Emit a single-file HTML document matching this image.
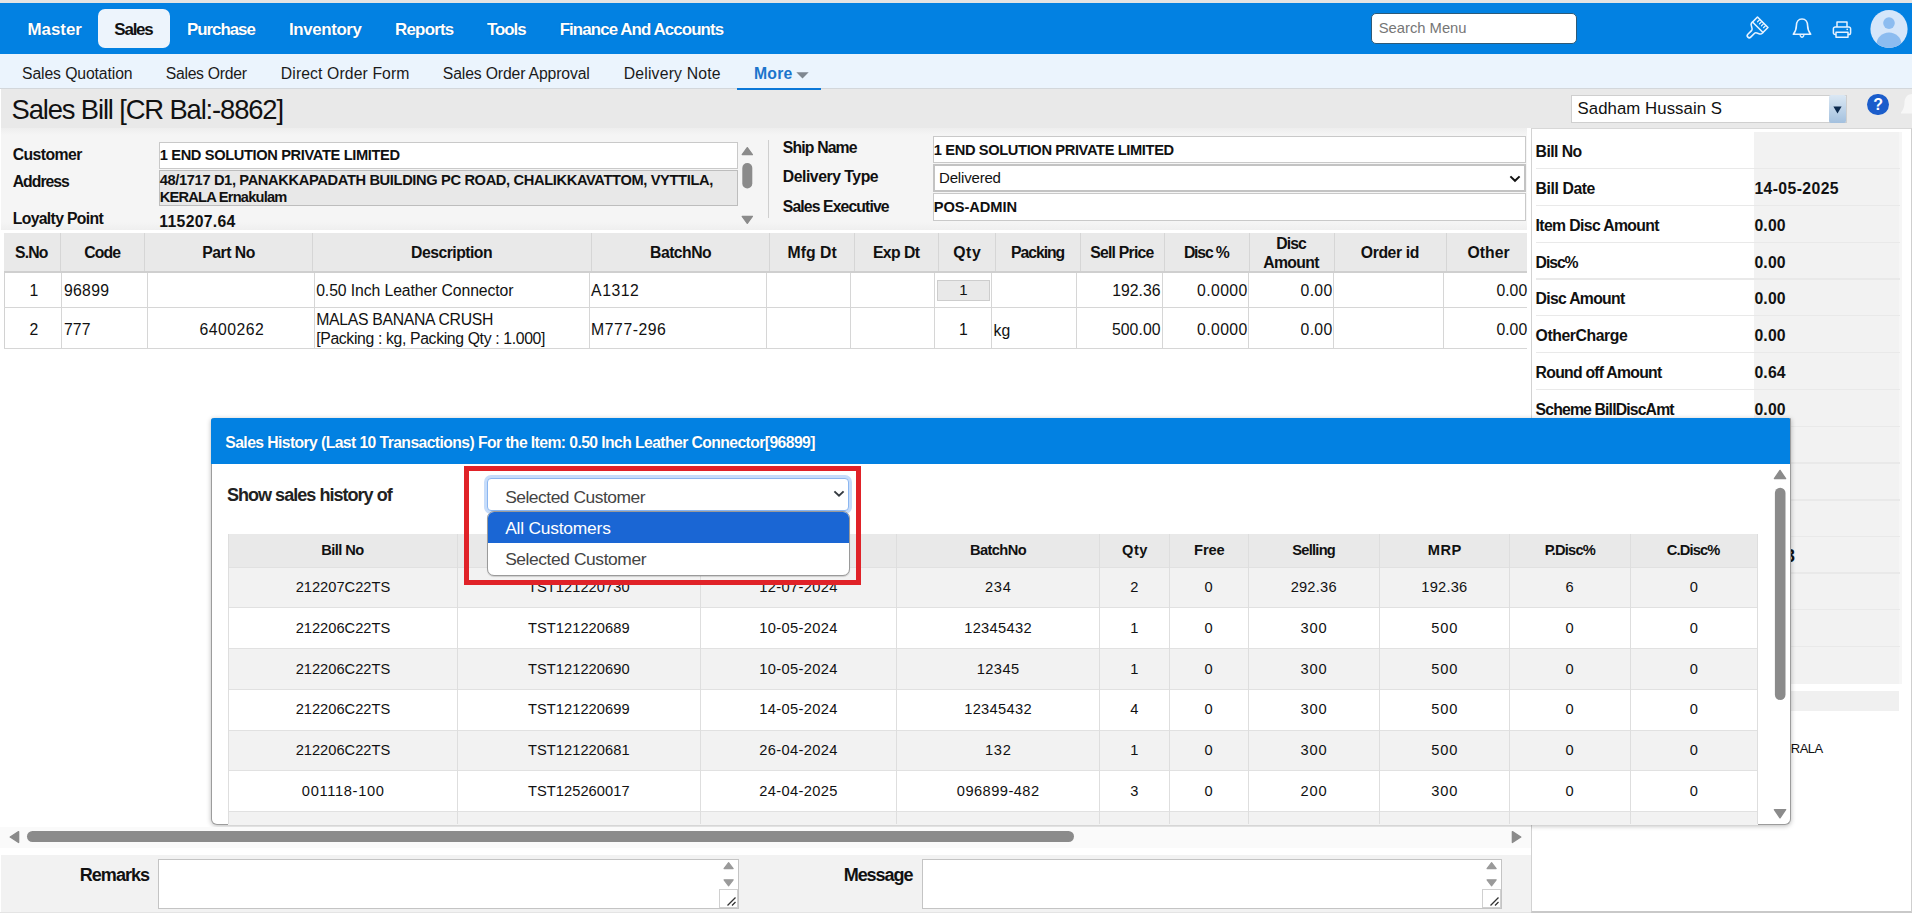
<!DOCTYPE html>
<html lang="en">
<head>
<meta charset="utf-8">
<title>Sales Bill</title>
<style>
*{box-sizing:border-box;margin:0;padding:0}
html,body{width:1912px;height:913px;overflow:hidden;background:#fff;font-family:"Liberation Sans",sans-serif}
#page{position:relative;width:1912px;height:913px;overflow:hidden;background:#fff}
#page div,#page svg{position:absolute}
.t{position:absolute;white-space:nowrap;font-family:"Liberation Sans",sans-serif}
</style>
</head>
<body>
<div id="page">
<div style="left:0px;top:0px;width:1912px;height:3px;background:#e4e4e4"></div>
<div style="left:0px;top:3px;width:1912px;height:51px;background:#0281e2"></div>
<div style="left:98px;top:8.5px;width:72px;height:39.5px;background:#edf4fc;border-radius:7px"></div>
<span class="t" style="left:27.57px;top:20.01px;font-size:16.91px;line-height:19px;color:#fff;font-weight:700;letter-spacing:-0.046px;text-shadow:0 0 1px rgba(0,40,90,.45);">Master</span>
<span class="t" style="left:114.37px;top:20.01px;font-size:16.91px;line-height:19px;color:#111;font-weight:700;letter-spacing:-1.205px;">Sales</span>
<span class="t" style="left:187.07px;top:20.01px;font-size:16.91px;line-height:19px;color:#fff;font-weight:700;letter-spacing:-1.051px;text-shadow:0 0 1px rgba(0,40,90,.45);">Purchase</span>
<span class="t" style="left:289.07px;top:20.01px;font-size:16.91px;line-height:19px;color:#fff;font-weight:700;letter-spacing:-0.405px;text-shadow:0 0 1px rgba(0,40,90,.45);">Inventory</span>
<span class="t" style="left:395.07px;top:20.01px;font-size:16.91px;line-height:19px;color:#fff;font-weight:700;letter-spacing:-0.787px;text-shadow:0 0 1px rgba(0,40,90,.45);">Reports</span>
<span class="t" style="left:487.07px;top:20.01px;font-size:16.91px;line-height:19px;color:#fff;font-weight:700;letter-spacing:-1.065px;text-shadow:0 0 1px rgba(0,40,90,.45);">Tools</span>
<span class="t" style="left:559.67px;top:20.01px;font-size:16.91px;line-height:19px;color:#fff;font-weight:700;letter-spacing:-0.919px;text-shadow:0 0 1px rgba(0,40,90,.45);">Finance And Accounts</span>
<div style="left:1371px;top:13px;width:206px;height:30.6px;background:#fff;border:1px solid #2d5a78;border-radius:5px"></div>
<span class="t" style="left:1378.74px;top:20.19px;font-size:14.8px;line-height:16px;color:#767676;letter-spacing:-0.021px;">Search Menu</span>
<svg style="left:1740.5px;top:14px" width="30" height="30" viewBox="-15 -15 30 30"><g transform="rotate(45)" fill="none" stroke="#e6f2ff" stroke-width="1.6" stroke-linejoin="round" stroke-linecap="round"><path d="M-7.4 -9.5 H7.4 V-1 C7.4 1.5 2 1.5 2 4 V9.5 A2 2 0 0 1 -2 9.5 V4 C-2 1.5 -7.4 1.5 -7.4 -1 Z"/><path d="M-7.4 -2.5 H7.4"/><path d="M-4 -9.5 V-6.2 M-1.2 -9.5 V-6.2 M1.6 -9.5 V-6.2 M4.4 -9.5 V-6.2" stroke-width="1.2"/></g></svg>
<svg style="left:1790px;top:16px" width="24" height="24" viewBox="0 0 24 24"><g fill="none" stroke="#e6f2ff" stroke-width="1.6" stroke-linejoin="round" stroke-linecap="round"><path d="M12 3 C8.3 3 6.4 6 6.4 9.6 C6.4 14 5 16.2 3.3 18.2 H20.7 C19 16.2 17.6 14 17.6 9.6 C17.6 6 15.7 3 12 3 Z"/><path d="M10.2 19.6 Q12 22.8 13.8 19.6" stroke-width="1.4"/></g></svg>
<svg style="left:1829.8px;top:18px" width="24" height="22" viewBox="0 0 24 22"><g fill="none" stroke="#e6f2ff" stroke-width="1.5" stroke-linejoin="round"><path d="M7 9 V4 H17 V9"/><path d="M6 16.5 H5.2 A1.8 1.8 0 0 1 3.4 14.7 V10.8 A1.8 1.8 0 0 1 5.2 9 H18.8 A1.8 1.8 0 0 1 20.6 10.8 V14.7 A1.8 1.8 0 0 1 18.8 16.5 H18"/><path d="M6 14.2 H18 V19.3 H6 Z"/></g><circle cx="17.2" cy="11.4" r=".8" fill="#e6f2ff"/></svg>
<svg style="left:1869.1px;top:9.3px" width="40" height="40" viewBox="0 0 40 40"><defs><clipPath id="av"><ellipse cx="20" cy="20" rx="18.6" ry="19"/></clipPath></defs><ellipse cx="20" cy="20" rx="18.6" ry="19" fill="#d5e6fa"/><g clip-path="url(#av)" fill="#8cbcf0"><circle cx="20" cy="14.1" r="5.8"/><ellipse cx="20" cy="35.5" rx="12.5" ry="12"/></g></svg>
<div style="left:0px;top:54px;width:1912px;height:35px;background:#ebf4fd;border-bottom:1px solid #d3d7db"></div>
<span class="t" style="left:22.01px;top:64.82px;font-size:15.78px;line-height:17px;color:#1a1a1a;letter-spacing:-0.115px;">Sales Quotation</span>
<span class="t" style="left:165.71px;top:64.82px;font-size:15.78px;line-height:17px;color:#1a1a1a;letter-spacing:-0.284px;">Sales Order</span>
<span class="t" style="left:280.81px;top:64.82px;font-size:15.78px;line-height:17px;color:#1a1a1a;letter-spacing:0.104px;">Direct Order Form</span>
<span class="t" style="left:442.81px;top:64.82px;font-size:15.78px;line-height:17px;color:#1a1a1a;letter-spacing:-0.151px;">Sales Order Approval</span>
<span class="t" style="left:623.71px;top:64.82px;font-size:15.78px;line-height:17px;color:#1a1a1a;letter-spacing:0.188px;">Delivery Note</span>
<span class="t" style="left:753.91px;top:64.82px;font-size:15.78px;line-height:17px;color:#1b74cc;font-weight:700;letter-spacing:0.237px;">More</span>
<svg style="left:796px;top:72px" width="13" height="7" viewBox="0 0 13 7"><path d="M0.3 0.3 H12.7 L6.5 6.6 Z" fill="#7f8790"/></svg>
<div style="left:737px;top:88px;width:84px;height:2px;background:#0b78d8"></div>
<div style="left:1px;top:89px;width:1911px;height:39px;background:#e9e9e9"></div>
<div style="left:737px;top:88px;width:84px;height:2px;background:#0b78d8"></div>
<span class="t" style="left:11.57px;top:93.92px;font-size:27.4px;line-height:31px;color:#111;letter-spacing:-1.144px;">Sales Bill [CR Bal:-8862]</span>
<div style="left:1571px;top:95.4px;width:275.5px;height:27.2px;background:#fff;border:1px solid #cfcfcf"></div>
<div style="left:1828.6px;top:95.4px;width:17.4px;height:27.4px;background:linear-gradient(#dbe8f4,#a3c0de);border-radius:2px"></div>
<svg style="left:1833px;top:105.5px" width="9" height="8" viewBox="0 0 9 8"><path d="M0.4 0.4 H8.6 L4.5 7.6 Z" fill="#0c2a4e"/></svg>
<span class="t" style="left:1577.57px;top:99.08px;font-size:16.8px;line-height:19px;color:#111;letter-spacing:0.054px;">Sadham Hussain S</span>
<div style="left:1867.2px;top:93.5px;width:21.9px;height:21.9px;background:#1b5dcb;border-radius:50%"></div>
<span class="t" style="left:1873.21px;top:96.30px;font-size:16px;line-height:17px;color:#fff;font-weight:700;">?</span>
<svg style="left:1898px;top:93.5px" width="14" height="22" viewBox="0 0 14 22"><path d="M14 0 C9 0 6.5 4 6.5 9 C6.5 13 5 16 3 18.5 L3 19.5 H14 Z" fill="#f7f7f7"/></svg>
<div style="left:1px;top:128px;width:1526px;height:102px;background:linear-gradient(#eeeeee,#f5f5f5 7px,#f5f5f5 94px,#efefef)"></div>
<span class="t" style="left:12.71px;top:146.42px;font-size:15.78px;line-height:17px;color:#111;font-weight:700;letter-spacing:-0.573px;">Customer</span>
<span class="t" style="left:12.71px;top:173.02px;font-size:15.78px;line-height:17px;color:#111;font-weight:700;letter-spacing:-0.985px;">Address</span>
<span class="t" style="left:12.71px;top:210.22px;font-size:15.78px;line-height:17px;color:#111;font-weight:700;letter-spacing:-0.667px;">Loyalty Point</span>
<div style="left:158.6px;top:141.5px;width:579px;height:27.5px;background:#fff;border:1px solid #c9c9c9"></div>
<span class="t" style="left:159.75px;top:146.94px;font-size:14.66px;line-height:16px;color:#111;font-weight:700;letter-spacing:-0.372px;">1 END SOLUTION PRIVATE LIMITED</span>
<div style="left:158.6px;top:170.2px;width:579px;height:35.5px;background:#e8e8e8;border:1px solid #bdbdbd"></div>
<span class="t" style="left:159.75px;top:172.24px;font-size:14.66px;line-height:16px;color:#111;font-weight:700;letter-spacing:-0.363px;">48/1717 D1, PANAKKAPADATH BUILDING PC ROAD, CHALIKKAVATTOM, VYTTILA,</span>
<span class="t" style="left:159.75px;top:189.04px;font-size:14.66px;line-height:16px;color:#111;font-weight:700;letter-spacing:-0.796px;">KERALA Ernakulam</span>
<span class="t" style="left:159.31px;top:213.32px;font-size:15.78px;line-height:17px;color:#111;font-weight:700;letter-spacing:0.303px;">115207.64</span>
<svg style="left:740px;top:145px" width="14" height="82" viewBox="0 0 14 82"><path d="M2.2 9.6 L7.3 2.6 L12.4 9.6 Z" fill="#8b8b8b" stroke="#8b8b8b" stroke-width="1.3" stroke-linejoin="round"/><rect x="2.3" y="18" width="10" height="25.5" rx="5" fill="#8b8b8b"/><path d="M2.2 71.4 L7.3 78.4 L12.4 71.4 Z" fill="#8b8b8b" stroke="#8b8b8b" stroke-width="1.3" stroke-linejoin="round"/></svg>
<div style="left:768px;top:140px;width:1px;height:78px;background:#cfcfcf"></div>
<span class="t" style="left:782.81px;top:138.82px;font-size:15.78px;line-height:17px;color:#111;font-weight:700;letter-spacing:-0.838px;">Ship Name</span>
<span class="t" style="left:782.81px;top:167.72px;font-size:15.78px;line-height:17px;color:#111;font-weight:700;letter-spacing:-0.465px;">Delivery Type</span>
<span class="t" style="left:782.81px;top:197.72px;font-size:15.78px;line-height:17px;color:#111;font-weight:700;letter-spacing:-0.887px;">Sales Executive</span>
<div style="left:933px;top:135.5px;width:593px;height:27px;background:#fff;border:1px solid #c9c9c9"></div>
<span class="t" style="left:933.85px;top:141.84px;font-size:14.66px;line-height:16px;color:#111;font-weight:700;letter-spacing:-0.372px;">1 END SOLUTION PRIVATE LIMITED</span>
<div style="left:933px;top:164px;width:593px;height:27.7px;background:#fff;border:2px solid #c3c3c3"></div>
<span class="t" style="left:939.04px;top:168.86px;font-size:15px;line-height:17px;color:#111;letter-spacing:-0.181px;">Delivered</span>
<svg style="left:1508.5px;top:174.5px" width="12" height="8" viewBox="0 0 12 8"><path d="M1.4 1.4 L6 5.8 L10.6 1.4" fill="none" stroke="#111" stroke-width="2"/></svg>
<div style="left:933px;top:193.4px;width:593px;height:27.2px;background:#fff;border:1px solid #c9c9c9"></div>
<span class="t" style="left:933.85px;top:199.34px;font-size:14.66px;line-height:16px;color:#111;font-weight:700;letter-spacing:-0.084px;">POS-ADMIN</span>
<div style="left:4px;top:233px;width:1523px;height:37.7px;background:#e9e9e9"></div>
<div style="left:4px;top:270.7px;width:1523px;height:2px;background:#cfcfcf"></div>
<div style="left:59.8px;top:233px;width:1px;height:37.7px;background:#d6d6d6"></div>
<div style="left:143.9px;top:233px;width:1px;height:37.7px;background:#d6d6d6"></div>
<div style="left:312.1px;top:233px;width:1px;height:37.7px;background:#d6d6d6"></div>
<div style="left:590.7px;top:233px;width:1px;height:37.7px;background:#d6d6d6"></div>
<div style="left:769.0px;top:233px;width:1px;height:37.7px;background:#d6d6d6"></div>
<div style="left:853.7px;top:233px;width:1px;height:37.7px;background:#d6d6d6"></div>
<div style="left:937.8px;top:233px;width:1px;height:37.7px;background:#d6d6d6"></div>
<div style="left:994.8px;top:233px;width:1px;height:37.7px;background:#d6d6d6"></div>
<div style="left:1079.6px;top:233px;width:1px;height:37.7px;background:#d6d6d6"></div>
<div style="left:1163.8px;top:233px;width:1px;height:37.7px;background:#d6d6d6"></div>
<div style="left:1248.7px;top:233px;width:1px;height:37.7px;background:#d6d6d6"></div>
<div style="left:1333.6px;top:233px;width:1px;height:37.7px;background:#d6d6d6"></div>
<div style="left:1445.8px;top:233px;width:1px;height:37.7px;background:#d6d6d6"></div>
<span class="t" style="left:15.01px;top:243.72px;font-size:15.78px;line-height:17px;color:#111;font-weight:700;letter-spacing:-0.879px;">S.No</span>
<span class="t" style="left:84.31px;top:243.72px;font-size:15.78px;line-height:17px;color:#111;font-weight:700;letter-spacing:-0.879px;">Code</span>
<span class="t" style="left:202.31px;top:243.72px;font-size:15.78px;line-height:17px;color:#111;font-weight:700;letter-spacing:-0.499px;">Part No</span>
<span class="t" style="left:411.11px;top:243.72px;font-size:15.78px;line-height:17px;color:#111;font-weight:700;letter-spacing:-0.525px;">Description</span>
<span class="t" style="left:650.11px;top:243.72px;font-size:15.78px;line-height:17px;color:#111;font-weight:700;letter-spacing:-0.557px;">BatchNo</span>
<span class="t" style="left:787.51px;top:243.72px;font-size:15.78px;line-height:17px;color:#111;font-weight:700;letter-spacing:0.030px;">Mfg Dt</span>
<span class="t" style="left:872.91px;top:243.72px;font-size:15.78px;line-height:17px;color:#111;font-weight:700;letter-spacing:-0.571px;">Exp Dt</span>
<span class="t" style="left:953.21px;top:243.72px;font-size:15.78px;line-height:17px;color:#111;font-weight:700;letter-spacing:0.651px;">Qty</span>
<span class="t" style="left:1011.01px;top:243.72px;font-size:15.78px;line-height:17px;color:#111;font-weight:700;letter-spacing:-1.048px;">Packing</span>
<span class="t" style="left:1090.31px;top:243.72px;font-size:15.78px;line-height:17px;color:#111;font-weight:700;letter-spacing:-0.780px;">Sell Price</span>
<span class="t" style="left:1183.91px;top:243.72px;font-size:15.78px;line-height:17px;color:#111;font-weight:700;letter-spacing:-1.184px;">Disc %</span>
<span class="t" style="left:1360.81px;top:243.72px;font-size:15.78px;line-height:17px;color:#111;font-weight:700;letter-spacing:-0.406px;">Order id</span>
<span class="t" style="left:1467.51px;top:243.72px;font-size:15.78px;line-height:17px;color:#111;font-weight:700;letter-spacing:0.034px;">Other</span>
<span class="t" style="left:1276.21px;top:234.82px;font-size:15.78px;line-height:17px;color:#111;font-weight:700;letter-spacing:-0.910px;">Disc</span>
<span class="t" style="left:1263.21px;top:253.62px;font-size:15.78px;line-height:17px;color:#111;font-weight:700;letter-spacing:-0.633px;">Amount</span>
<div style="left:4px;top:272.7px;width:1523px;height:76px;background:#fff;border-left:1px solid #d2d2d2"></div>
<div style="left:4px;top:306.8px;width:1523px;height:1px;background:#d6d6d6"></div>
<div style="left:4px;top:348px;width:1523px;height:1px;background:#d6d6d6"></div>
<div style="left:60.5px;top:272.7px;width:1px;height:75.5px;background:#d6d6d6"></div>
<div style="left:147.1px;top:272.7px;width:1px;height:75.5px;background:#d6d6d6"></div>
<div style="left:313.8px;top:272.7px;width:1px;height:75.5px;background:#d6d6d6"></div>
<div style="left:588.7px;top:272.7px;width:1px;height:75.5px;background:#d6d6d6"></div>
<div style="left:765.9px;top:272.7px;width:1px;height:75.5px;background:#d6d6d6"></div>
<div style="left:849.9px;top:272.7px;width:1px;height:75.5px;background:#d6d6d6"></div>
<div style="left:934.0px;top:272.7px;width:1px;height:75.5px;background:#d6d6d6"></div>
<div style="left:991.0px;top:272.7px;width:1px;height:75.5px;background:#d6d6d6"></div>
<div style="left:1075.9px;top:272.7px;width:1px;height:75.5px;background:#d6d6d6"></div>
<div style="left:1162.0px;top:272.7px;width:1px;height:75.5px;background:#d6d6d6"></div>
<div style="left:1248.0px;top:272.7px;width:1px;height:75.5px;background:#d6d6d6"></div>
<div style="left:1332.8px;top:272.7px;width:1px;height:75.5px;background:#d6d6d6"></div>
<div style="left:1442.8px;top:272.7px;width:1px;height:75.5px;background:#d6d6d6"></div>
<span class="t" style="left:29.51px;top:282.42px;font-size:15.78px;line-height:17px;color:#111;">1</span>
<span class="t" style="left:63.91px;top:282.42px;font-size:15.78px;line-height:17px;color:#111;letter-spacing:0.335px;">96899</span>
<span class="t" style="left:316.21px;top:282.42px;font-size:15.78px;line-height:17px;color:#111;letter-spacing:-0.098px;">0.50 Inch Leather Connector</span>
<span class="t" style="left:591.11px;top:282.42px;font-size:15.78px;line-height:17px;color:#111;letter-spacing:0.522px;">A1312</span>
<div style="left:936.5px;top:279.5px;width:53.3px;height:21.3px;background:#e9e9e9;border:1px solid #cdcdcd"></div>
<span class="t" style="left:959.23px;top:281.16px;font-size:15px;line-height:17px;color:#111;">1</span>
<span class="t" style="left:1112.21px;top:282.42px;font-size:15.78px;line-height:17px;color:#111;letter-spacing:0.030px;">192.36</span>
<span class="t" style="left:1197.11px;top:282.42px;font-size:15.78px;line-height:17px;color:#111;letter-spacing:0.390px;">0.0000</span>
<span class="t" style="left:1300.61px;top:282.42px;font-size:15.78px;line-height:17px;color:#111;letter-spacing:0.299px;">0.00</span>
<span class="t" style="left:1496.41px;top:282.42px;font-size:15.78px;line-height:17px;color:#111;letter-spacing:0.032px;">0.00</span>
<span class="t" style="left:29.51px;top:320.72px;font-size:15.78px;line-height:17px;color:#111;">2</span>
<span class="t" style="left:63.91px;top:320.72px;font-size:15.78px;line-height:17px;color:#111;letter-spacing:0.135px;">777</span>
<span class="t" style="left:199.51px;top:320.72px;font-size:15.78px;line-height:17px;color:#111;letter-spacing:0.465px;">6400262</span>
<span class="t" style="left:316.21px;top:310.92px;font-size:15.78px;line-height:17px;color:#111;letter-spacing:-0.297px;">MALAS BANANA CRUSH</span>
<span class="t" style="left:316.21px;top:329.82px;font-size:15.78px;line-height:17px;color:#111;letter-spacing:-0.348px;">[Packing : kg, Packing Qty : 1.000]</span>
<span class="t" style="left:591.11px;top:320.72px;font-size:15.78px;line-height:17px;color:#111;letter-spacing:0.540px;">M777-296</span>
<span class="t" style="left:959.11px;top:320.72px;font-size:15.78px;line-height:17px;color:#111;">1</span>
<span class="t" style="left:993.41px;top:321.92px;font-size:15.78px;line-height:17px;color:#111;letter-spacing:0.327px;">kg</span>
<span class="t" style="left:1111.91px;top:320.72px;font-size:15.78px;line-height:17px;color:#111;letter-spacing:0.090px;">500.00</span>
<span class="t" style="left:1197.11px;top:320.72px;font-size:15.78px;line-height:17px;color:#111;letter-spacing:0.390px;">0.0000</span>
<span class="t" style="left:1300.61px;top:320.72px;font-size:15.78px;line-height:17px;color:#111;letter-spacing:0.299px;">0.00</span>
<span class="t" style="left:1496.41px;top:320.72px;font-size:15.78px;line-height:17px;color:#111;letter-spacing:0.032px;">0.00</span>
<div style="left:1530.5px;top:127.7px;width:381.5px;height:785.3px;background:#fff;border-left:1.5px solid #d2d2d2;border-top:1px solid #d8d8d8;border-right:1px solid #cfcfcf;border-bottom:2px solid #c9c9c9"></div>
<div style="left:1754px;top:132px;width:147.5px;height:552px;background:linear-gradient(90deg,#f2f2f2 145px,#f6f6f6 145px)"></div>
<div style="left:1790px;top:691px;width:109px;height:20px;background:#f0f0f0"></div>
<div style="left:1536px;top:167.8px;width:364px;height:1.4px;background:#e9e9e9"></div>
<div style="left:1536px;top:204.70000000000002px;width:364px;height:1.4px;background:#e9e9e9"></div>
<div style="left:1536px;top:241.60000000000002px;width:364px;height:1.4px;background:#e9e9e9"></div>
<div style="left:1536px;top:278.3px;width:364px;height:1.4px;background:#e9e9e9"></div>
<div style="left:1536px;top:314.8px;width:364px;height:1.4px;background:#e9e9e9"></div>
<div style="left:1536px;top:351.7px;width:364px;height:1.4px;background:#e9e9e9"></div>
<div style="left:1536px;top:388.7px;width:364px;height:1.4px;background:#e9e9e9"></div>
<div style="left:1536px;top:425.7px;width:364px;height:1.4px;background:#e9e9e9"></div>
<div style="left:1536px;top:462.3px;width:364px;height:1.4px;background:#e9e9e9"></div>
<div style="left:1536px;top:499.3px;width:364px;height:1.4px;background:#e9e9e9"></div>
<div style="left:1536px;top:535.9px;width:364px;height:1.4px;background:#e9e9e9"></div>
<div style="left:1536px;top:572.3px;width:364px;height:1.4px;background:#e9e9e9"></div>
<div style="left:1536px;top:609.0px;width:364px;height:1.4px;background:#e9e9e9"></div>
<div style="left:1536px;top:645.5px;width:364px;height:1.4px;background:#e9e9e9"></div>
<span class="t" style="left:1535.61px;top:143.12px;font-size:15.78px;line-height:17px;color:#111;font-weight:700;letter-spacing:-0.576px;">Bill No</span>
<span class="t" style="left:1535.61px;top:179.92px;font-size:15.78px;line-height:17px;color:#111;font-weight:700;letter-spacing:-0.412px;">Bill Date</span>
<span class="t" style="left:1754.41px;top:179.92px;font-size:15.78px;line-height:17px;color:#111;font-weight:700;letter-spacing:0.392px;">14-05-2025</span>
<span class="t" style="left:1535.61px;top:216.92px;font-size:15.78px;line-height:17px;color:#111;font-weight:700;letter-spacing:-0.631px;">Item Disc Amount</span>
<span class="t" style="left:1754.41px;top:216.92px;font-size:15.78px;line-height:17px;color:#111;font-weight:700;letter-spacing:0.165px;">0.00</span>
<span class="t" style="left:1535.61px;top:254.02px;font-size:15.78px;line-height:17px;color:#111;font-weight:700;letter-spacing:-1.086px;">Disc%</span>
<span class="t" style="left:1754.41px;top:254.02px;font-size:15.78px;line-height:17px;color:#111;font-weight:700;letter-spacing:0.165px;">0.00</span>
<span class="t" style="left:1535.61px;top:290.22px;font-size:15.78px;line-height:17px;color:#111;font-weight:700;letter-spacing:-0.707px;">Disc Amount</span>
<span class="t" style="left:1754.41px;top:290.22px;font-size:15.78px;line-height:17px;color:#111;font-weight:700;letter-spacing:0.165px;">0.00</span>
<span class="t" style="left:1535.61px;top:327.12px;font-size:15.78px;line-height:17px;color:#111;font-weight:700;letter-spacing:-0.419px;">OtherCharge</span>
<span class="t" style="left:1754.41px;top:327.12px;font-size:15.78px;line-height:17px;color:#111;font-weight:700;letter-spacing:0.165px;">0.00</span>
<span class="t" style="left:1535.61px;top:364.22px;font-size:15.78px;line-height:17px;color:#111;font-weight:700;letter-spacing:-0.745px;">Round off Amount</span>
<span class="t" style="left:1754.41px;top:364.22px;font-size:15.78px;line-height:17px;color:#111;font-weight:700;letter-spacing:0.165px;">0.64</span>
<span class="t" style="left:1535.61px;top:401.12px;font-size:15.78px;line-height:17px;color:#111;font-weight:700;letter-spacing:-0.845px;">Scheme BillDiscAmt</span>
<span class="t" style="left:1754.41px;top:401.12px;font-size:15.78px;line-height:17px;color:#111;font-weight:700;letter-spacing:0.165px;">0.00</span>
<span class="t" style="left:1784.92px;top:546.49px;font-size:18px;line-height:20px;color:#111;font-weight:700;">3</span>
<span class="t" style="left:1790.81px;top:740.87px;font-size:13px;line-height:15px;color:#111;letter-spacing:-0.498px;">RALA</span>
<div style="left:210.8px;top:418.3px;width:1580px;height:406.3px;background:#fff;border:1px solid #9c9c9c;border-top:none;border-radius:3px 1px 6px 6px;box-shadow:0 1px 5px rgba(0,0,0,.28)"></div>
<div style="left:211.3px;top:418.3px;width:1579px;height:45.3px;background:#0281e2;border-radius:3px 1px 0 0"></div>
<span class="t" style="left:225.31px;top:433.92px;font-size:15.78px;line-height:17px;color:#fff;font-weight:700;letter-spacing:-0.609px;text-shadow:0 0 1px rgba(0,40,90,.4);">Sales History (Last 10 Transactions) For the Item: 0.50 Inch Leather Connector[96899]</span>
<span class="t" style="left:226.92px;top:485.10px;font-size:18.04px;line-height:20px;color:#222;font-weight:700;letter-spacing:-0.976px;">Show sales history of</span>
<div style="left:228.4px;top:534.2px;width:1529.2px;height:32.4px;background:#e9e9e9"></div>
<span class="t" style="left:321.25px;top:542.24px;font-size:14.66px;line-height:16px;color:#111;font-weight:700;letter-spacing:-0.570px;">Bill No</span>
<span class="t" style="left:970.05px;top:542.24px;font-size:14.66px;line-height:16px;color:#111;font-weight:700;letter-spacing:-0.611px;">BatchNo</span>
<span class="t" style="left:1122.05px;top:542.24px;font-size:14.66px;line-height:16px;color:#111;font-weight:700;letter-spacing:0.481px;">Qty</span>
<span class="t" style="left:1194.05px;top:542.24px;font-size:14.66px;line-height:16px;color:#111;font-weight:700;letter-spacing:-0.090px;">Free</span>
<span class="t" style="left:1292.35px;top:542.24px;font-size:14.66px;line-height:16px;color:#111;font-weight:700;letter-spacing:-0.761px;">Selling</span>
<span class="t" style="left:1427.75px;top:542.24px;font-size:14.66px;line-height:16px;color:#111;font-weight:700;letter-spacing:0.511px;">MRP</span>
<span class="t" style="left:1544.65px;top:542.24px;font-size:14.66px;line-height:16px;color:#111;font-weight:700;letter-spacing:-0.792px;">P.Disc%</span>
<span class="t" style="left:1666.75px;top:542.24px;font-size:14.66px;line-height:16px;color:#111;font-weight:700;letter-spacing:-0.843px;">C.Disc%</span>
<span class="t" style="left:541.74px;top:542.24px;font-size:14.66px;line-height:16px;color:#111;font-weight:700;">Invoice No</span>
<span class="t" style="left:782.41px;top:542.24px;font-size:14.66px;line-height:16px;color:#111;font-weight:700;">Date</span>
<div style="left:228.4px;top:566.6px;width:1529.2px;height:40.799999999999955px;background:#f2f2f2;border-top:1px solid #e1e1e1"></div>
<div style="left:228.4px;top:607.4px;width:1529.2px;height:40.60000000000002px;background:#fff;border-top:1px solid #e1e1e1"></div>
<div style="left:228.4px;top:648px;width:1529.2px;height:41px;background:#f2f2f2;border-top:1px solid #e1e1e1"></div>
<div style="left:228.4px;top:689px;width:1529.2px;height:40.5px;background:#fff;border-top:1px solid #e1e1e1"></div>
<div style="left:228.4px;top:729.5px;width:1529.2px;height:40.799999999999955px;background:#f2f2f2;border-top:1px solid #e1e1e1"></div>
<div style="left:228.4px;top:770.3px;width:1529.2px;height:40.700000000000045px;background:#fff;border-top:1px solid #e1e1e1"></div>
<div style="left:228.4px;top:811px;width:1529.2px;height:13.600000000000023px;background:#f2f2f2;border-top:1px solid #e1e1e1"></div>
<div style="left:227.9px;top:534.2px;width:1px;height:290px;background:#dedede"></div>
<div style="left:456.9px;top:534.2px;width:1px;height:290px;background:#dedede"></div>
<div style="left:699.7px;top:534.2px;width:1px;height:290px;background:#dedede"></div>
<div style="left:896.0px;top:534.2px;width:1px;height:290px;background:#dedede"></div>
<div style="left:1098.9px;top:534.2px;width:1px;height:290px;background:#dedede"></div>
<div style="left:1168.8px;top:534.2px;width:1px;height:290px;background:#dedede"></div>
<div style="left:1247.5px;top:534.2px;width:1px;height:290px;background:#dedede"></div>
<div style="left:1378.7px;top:534.2px;width:1px;height:290px;background:#dedede"></div>
<div style="left:1508.9px;top:534.2px;width:1px;height:290px;background:#dedede"></div>
<div style="left:1629.5px;top:534.2px;width:1px;height:290px;background:#dedede"></div>
<div style="left:1757.1px;top:534.2px;width:1px;height:290px;background:#dedede"></div>
<span class="t" style="left:295.65px;top:579.24px;font-size:14.66px;line-height:16px;color:#111;">212207C22TS</span>
<span class="t" style="left:528.05px;top:579.24px;font-size:14.66px;line-height:16px;color:#111;letter-spacing:0.041px;">TST121220730</span>
<span class="t" style="left:759.25px;top:579.24px;font-size:14.66px;line-height:16px;color:#111;letter-spacing:0.357px;">12-07-2024</span>
<span class="t" style="left:984.95px;top:579.24px;font-size:14.66px;line-height:16px;color:#111;letter-spacing:0.765px;">234</span>
<span class="t" style="left:1130.27px;top:579.24px;font-size:14.66px;line-height:16px;color:#111;">2</span>
<span class="t" style="left:1204.57px;top:579.24px;font-size:14.66px;line-height:16px;color:#111;">0</span>
<span class="t" style="left:1290.65px;top:579.24px;font-size:14.66px;line-height:16px;color:#111;letter-spacing:0.214px;">292.36</span>
<span class="t" style="left:1421.35px;top:579.24px;font-size:14.66px;line-height:16px;color:#111;letter-spacing:0.214px;">192.36</span>
<span class="t" style="left:1565.62px;top:579.24px;font-size:14.66px;line-height:16px;color:#111;">6</span>
<span class="t" style="left:1689.72px;top:579.24px;font-size:14.66px;line-height:16px;color:#111;">0</span>
<span class="t" style="left:295.65px;top:619.94px;font-size:14.66px;line-height:16px;color:#111;">212206C22TS</span>
<span class="t" style="left:528.05px;top:619.94px;font-size:14.66px;line-height:16px;color:#111;letter-spacing:0.041px;">TST121220689</span>
<span class="t" style="left:759.25px;top:619.94px;font-size:14.66px;line-height:16px;color:#111;letter-spacing:0.357px;">10-05-2024</span>
<span class="t" style="left:964.15px;top:619.94px;font-size:14.66px;line-height:16px;color:#111;letter-spacing:0.340px;">12345432</span>
<span class="t" style="left:1130.27px;top:619.94px;font-size:14.66px;line-height:16px;color:#111;">1</span>
<span class="t" style="left:1204.57px;top:619.94px;font-size:14.66px;line-height:16px;color:#111;">0</span>
<span class="t" style="left:1300.60px;top:619.94px;font-size:14.66px;line-height:16px;color:#111;letter-spacing:0.765px;">300</span>
<span class="t" style="left:1431.30px;top:619.94px;font-size:14.66px;line-height:16px;color:#111;letter-spacing:0.765px;">500</span>
<span class="t" style="left:1565.62px;top:619.94px;font-size:14.66px;line-height:16px;color:#111;">0</span>
<span class="t" style="left:1689.72px;top:619.94px;font-size:14.66px;line-height:16px;color:#111;">0</span>
<span class="t" style="left:295.65px;top:660.74px;font-size:14.66px;line-height:16px;color:#111;">212206C22TS</span>
<span class="t" style="left:528.05px;top:660.74px;font-size:14.66px;line-height:16px;color:#111;letter-spacing:0.041px;">TST121220690</span>
<span class="t" style="left:759.25px;top:660.74px;font-size:14.66px;line-height:16px;color:#111;letter-spacing:0.357px;">10-05-2024</span>
<span class="t" style="left:976.80px;top:660.74px;font-size:14.66px;line-height:16px;color:#111;letter-spacing:0.383px;">12345</span>
<span class="t" style="left:1130.27px;top:660.74px;font-size:14.66px;line-height:16px;color:#111;">1</span>
<span class="t" style="left:1204.57px;top:660.74px;font-size:14.66px;line-height:16px;color:#111;">0</span>
<span class="t" style="left:1300.60px;top:660.74px;font-size:14.66px;line-height:16px;color:#111;letter-spacing:0.765px;">300</span>
<span class="t" style="left:1431.30px;top:660.74px;font-size:14.66px;line-height:16px;color:#111;letter-spacing:0.765px;">500</span>
<span class="t" style="left:1565.62px;top:660.74px;font-size:14.66px;line-height:16px;color:#111;">0</span>
<span class="t" style="left:1689.72px;top:660.74px;font-size:14.66px;line-height:16px;color:#111;">0</span>
<span class="t" style="left:295.65px;top:701.49px;font-size:14.66px;line-height:16px;color:#111;">212206C22TS</span>
<span class="t" style="left:528.05px;top:701.49px;font-size:14.66px;line-height:16px;color:#111;letter-spacing:0.041px;">TST121220699</span>
<span class="t" style="left:759.25px;top:701.49px;font-size:14.66px;line-height:16px;color:#111;letter-spacing:0.357px;">14-05-2024</span>
<span class="t" style="left:964.15px;top:701.49px;font-size:14.66px;line-height:16px;color:#111;letter-spacing:0.340px;">12345432</span>
<span class="t" style="left:1130.27px;top:701.49px;font-size:14.66px;line-height:16px;color:#111;">4</span>
<span class="t" style="left:1204.57px;top:701.49px;font-size:14.66px;line-height:16px;color:#111;">0</span>
<span class="t" style="left:1300.60px;top:701.49px;font-size:14.66px;line-height:16px;color:#111;letter-spacing:0.765px;">300</span>
<span class="t" style="left:1431.30px;top:701.49px;font-size:14.66px;line-height:16px;color:#111;letter-spacing:0.765px;">500</span>
<span class="t" style="left:1565.62px;top:701.49px;font-size:14.66px;line-height:16px;color:#111;">0</span>
<span class="t" style="left:1689.72px;top:701.49px;font-size:14.66px;line-height:16px;color:#111;">0</span>
<span class="t" style="left:295.65px;top:742.14px;font-size:14.66px;line-height:16px;color:#111;">212206C22TS</span>
<span class="t" style="left:528.05px;top:742.14px;font-size:14.66px;line-height:16px;color:#111;letter-spacing:0.041px;">TST121220681</span>
<span class="t" style="left:759.25px;top:742.14px;font-size:14.66px;line-height:16px;color:#111;letter-spacing:0.357px;">26-04-2024</span>
<span class="t" style="left:984.95px;top:742.14px;font-size:14.66px;line-height:16px;color:#111;letter-spacing:0.765px;">132</span>
<span class="t" style="left:1130.27px;top:742.14px;font-size:14.66px;line-height:16px;color:#111;">1</span>
<span class="t" style="left:1204.57px;top:742.14px;font-size:14.66px;line-height:16px;color:#111;">0</span>
<span class="t" style="left:1300.60px;top:742.14px;font-size:14.66px;line-height:16px;color:#111;letter-spacing:0.765px;">300</span>
<span class="t" style="left:1431.30px;top:742.14px;font-size:14.66px;line-height:16px;color:#111;letter-spacing:0.765px;">500</span>
<span class="t" style="left:1565.62px;top:742.14px;font-size:14.66px;line-height:16px;color:#111;">0</span>
<span class="t" style="left:1689.72px;top:742.14px;font-size:14.66px;line-height:16px;color:#111;">0</span>
<span class="t" style="left:301.80px;top:782.89px;font-size:14.66px;line-height:16px;color:#111;letter-spacing:0.680px;">001118-100</span>
<span class="t" style="left:528.05px;top:782.89px;font-size:14.66px;line-height:16px;color:#111;letter-spacing:0.041px;">TST125260017</span>
<span class="t" style="left:759.25px;top:782.89px;font-size:14.66px;line-height:16px;color:#111;letter-spacing:0.357px;">24-04-2025</span>
<span class="t" style="left:956.85px;top:782.89px;font-size:14.66px;line-height:16px;color:#111;letter-spacing:0.439px;">096899-482</span>
<span class="t" style="left:1130.27px;top:782.89px;font-size:14.66px;line-height:16px;color:#111;">3</span>
<span class="t" style="left:1204.57px;top:782.89px;font-size:14.66px;line-height:16px;color:#111;">0</span>
<span class="t" style="left:1300.60px;top:782.89px;font-size:14.66px;line-height:16px;color:#111;letter-spacing:0.765px;">200</span>
<span class="t" style="left:1431.30px;top:782.89px;font-size:14.66px;line-height:16px;color:#111;letter-spacing:0.765px;">300</span>
<span class="t" style="left:1565.62px;top:782.89px;font-size:14.66px;line-height:16px;color:#111;">0</span>
<span class="t" style="left:1689.72px;top:782.89px;font-size:14.66px;line-height:16px;color:#111;">0</span>
<svg style="left:1773.3px;top:468px" width="14" height="352" viewBox="0 0 14 352"><path d="M1.4 10.6 L7 2.4 L12.6 10.6 Z" fill="#8b8b8b" stroke="#8b8b8b" stroke-width="1.4" stroke-linejoin="round"/><rect x="1.9" y="19.7" width="10.6" height="212.3" rx="5.3" fill="#8b8b8b"/><path d="M1.4 341.6 L7 349.8 L12.6 341.6 Z" fill="#8b8b8b" stroke="#8b8b8b" stroke-width="1.4" stroke-linejoin="round"/></svg>
<div style="left:487.2px;top:478.3px;width:361.5px;height:32.5px;background:#fff;border:1px solid #8bb6f0;border-radius:4px;box-shadow:0 0 0 3px #c6dcfa"></div>
<span class="t" style="left:505.15px;top:486.79px;font-size:17.42px;line-height:20px;color:#444;letter-spacing:-0.477px;">Selected Customer</span>
<svg style="left:832.5px;top:490.2px" width="12" height="8" viewBox="0 0 12 8"><path d="M1.4 1.4 L6 5.8 L10.6 1.4" fill="none" stroke="#343a40" stroke-width="1.9"/></svg>
<div style="left:487.3px;top:511px;width:363px;height:64.8px;background:#fff;border:1px solid #9a9a9a;border-radius:7px;overflow:hidden;box-shadow:0 1px 1px rgba(0,0,0,.15)"><div style="left:-1px;top:-1px;width:363px;height:32.4px;background:#1a66d4"></div></div>
<span class="t" style="left:505.15px;top:518.39px;font-size:17.42px;line-height:20px;color:#fff;letter-spacing:-0.220px;">All Customers</span>
<span class="t" style="left:505.15px;top:549.09px;font-size:17.42px;line-height:20px;color:#444;letter-spacing:-0.420px;">Selected Customer</span>
<div style="left:463.8px;top:466px;width:397.4px;height:118.7px;border:5px solid #e02228"></div>
<div style="left:0px;top:827px;width:1530.5px;height:20.5px;background:#fafafa"></div>
<svg style="left:8px;top:830px" width="13" height="14" viewBox="0 0 13 14"><path d="M10.6 1.6 L2.2 7 L10.6 12.4 Z" fill="#8b8b8b" stroke="#8b8b8b" stroke-width="1.4" stroke-linejoin="round"/></svg>
<div style="left:26.8px;top:831px;width:1047.5px;height:11px;background:#8b8b8b;border-radius:5.5px"></div>
<svg style="left:1509.5px;top:830px" width="13" height="14" viewBox="0 0 13 14"><path d="M2.4 1.6 L10.8 7 L2.4 12.4 Z" fill="#8b8b8b" stroke="#8b8b8b" stroke-width="1.4" stroke-linejoin="round"/></svg>
<div style="left:1px;top:855px;width:1529.5px;height:56.5px;background:#f2f2f2"></div>
<div style="left:0px;top:911.5px;width:1530.5px;height:1.5px;background:#e4e4e4"></div>
<span class="t" style="left:79.82px;top:864.70px;font-size:18.04px;line-height:20px;color:#111;font-weight:700;letter-spacing:-1.006px;">Remarks</span>
<span class="t" style="left:843.72px;top:864.70px;font-size:18.04px;line-height:20px;color:#111;font-weight:700;letter-spacing:-1.072px;">Message</span>
<div style="left:158.4px;top:859.4px;width:580.2px;height:49.4px;background:#fff;border:1px solid #c4c4c4"></div><svg style="left:718.6px;top:860.4px" width="19" height="48" viewBox="0 0 19 48"><path d="M5 8.6 L9.6 2.6 L14.2 8.6 Z" fill="#9a9a9a" stroke="#9a9a9a" stroke-width="1.1" stroke-linejoin="round"/><path d="M5 19.8 L9.6 25.8 L14.2 19.8 Z" fill="#9a9a9a" stroke="#9a9a9a" stroke-width="1.1" stroke-linejoin="round"/><rect x="0.5" y="29.5" width="18" height="18" fill="#fff" stroke="#d0d0d0"/><path d="M8.5 45.5 L16.5 37.5 M13 45.5 L16.5 42" stroke="#333" stroke-width="1.3" fill="none"/></svg>
<div style="left:922px;top:859.4px;width:580px;height:49.4px;background:#fff;border:1px solid #c4c4c4"></div><svg style="left:1482px;top:860.4px" width="19" height="48" viewBox="0 0 19 48"><path d="M5 8.6 L9.6 2.6 L14.2 8.6 Z" fill="#9a9a9a" stroke="#9a9a9a" stroke-width="1.1" stroke-linejoin="round"/><path d="M5 19.8 L9.6 25.8 L14.2 19.8 Z" fill="#9a9a9a" stroke="#9a9a9a" stroke-width="1.1" stroke-linejoin="round"/><rect x="0.5" y="29.5" width="18" height="18" fill="#fff" stroke="#d0d0d0"/><path d="M8.5 45.5 L16.5 37.5 M13 45.5 L16.5 42" stroke="#333" stroke-width="1.3" fill="none"/></svg>

</div>
</body>
</html>
